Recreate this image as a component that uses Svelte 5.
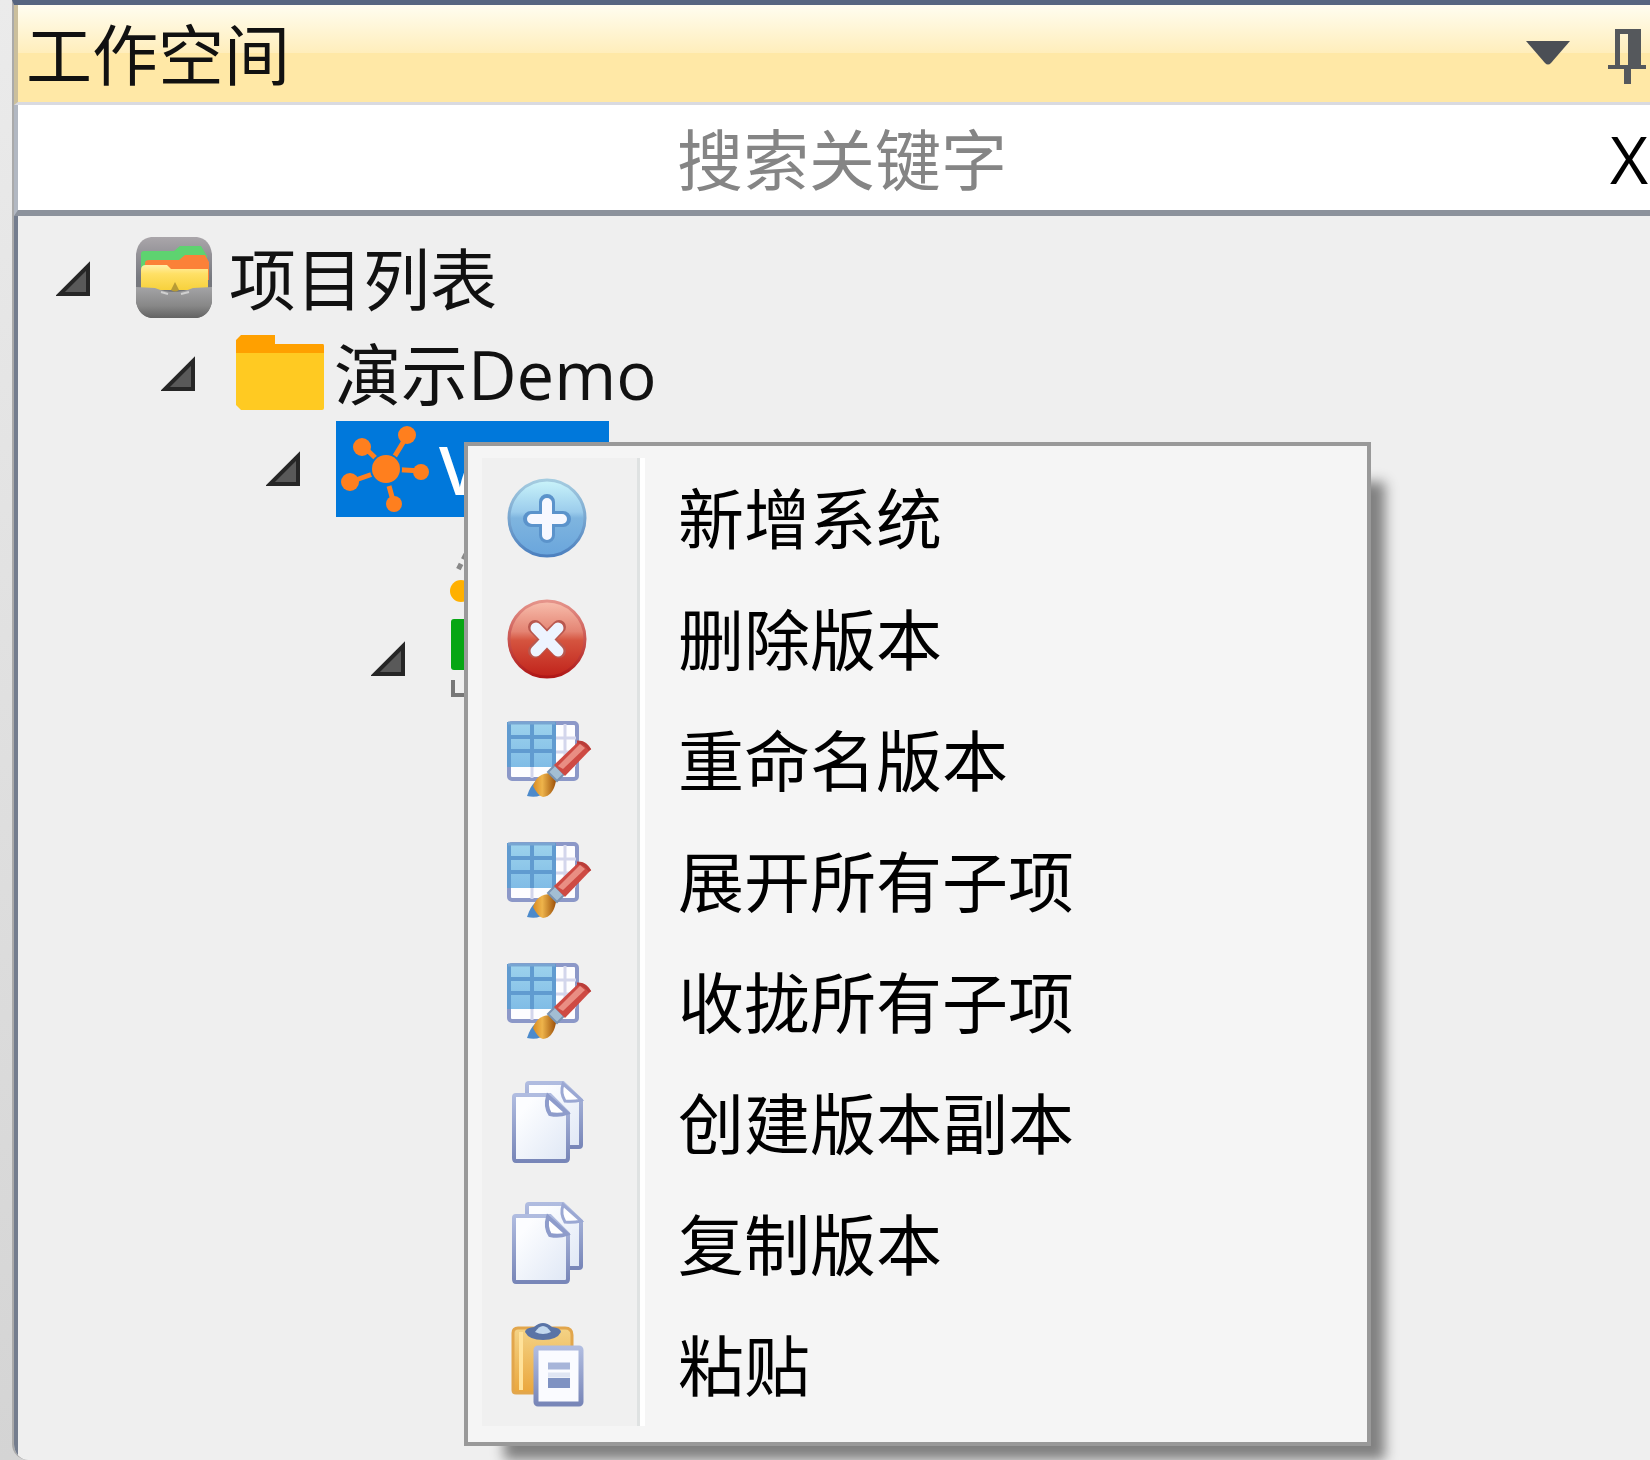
<script>
  let keyword = $state('');

  const menuItems = [
    { icon: 'add', label: '新增系统' },
    { icon: 'remove', label: '删除版本' },
    { icon: 'edit', label: '重命名版本' },
    { icon: 'edit', label: '展开所有子项' },
    { icon: 'edit', label: '收拢所有子项' },
    { icon: 'copy', label: '创建版本副本' },
    { icon: 'copy', label: '复制版本' },
    { icon: 'paste', label: '粘贴' }
  ];
</script>

{#snippet toggle(name)}
  <button class="toggle" aria-label={name} aria-expanded="true">
    <svg viewBox="0 0 36 36" width="36" height="36" aria-hidden="true">
      <path d="M32 5V33H4Z" fill="#595959" stroke="#262626" stroke-width="4" />
    </svg>
  </button>
{/snippet}

{#snippet menuIcon(kind)}
  <svg class="menu-icon" viewBox="0 0 90 90" aria-hidden="true">
    {#if kind === 'add'}
      <circle cx="42" cy="44" r="38" fill="url(#blueBall)" stroke="url(#blueRim)" stroke-width="3" />
      <path d="M42 28V61M26 45H58" stroke="#5b93cb" stroke-width="16" stroke-linecap="round" />
      <path d="M42 29V61M27 45H57" stroke="#f7f8ff" stroke-width="10" stroke-linecap="round" />
    {:else if kind === 'remove'}
      <circle cx="42" cy="44" r="38" fill="url(#redBall)" stroke="url(#redRim)" stroke-width="3" />
      <path d="M30 32L54 56M54 32L30 56" stroke="#b9584f" stroke-width="14" stroke-linecap="round" />
      <path d="M31 33L53 56M53 33L31 56" stroke="#edf4ff" stroke-width="11" stroke-linecap="round" />
    {:else if kind === 'edit'}
      <rect x="4" y="7" width="68" height="56" rx="3" fill="#fdfdff" stroke="#8c98c8" stroke-width="4" />
      <path d="M50 22H71M50 36H71M50 49H71M60 8V50M27 51V62M50 51V62" stroke="#d3d6ec" stroke-width="3" />
      <rect x="3" y="6" width="47" height="45" fill="url(#tableBlue)" />
      <path d="M3 21H50M3 35H50M27 6V51M49 6V51M4 6V51" stroke="#609bd0" stroke-width="4" />
      <path d="M3 7H50" stroke="#78a5d2" stroke-width="3" />
      <path d="M22 80Q25 70 31 65L42 75Q34 83 22 80Z" fill="#4c8acb" />
      <path d="M28 70Q32 57 46 57L51 65Q48 80 38 81Q33 80 28 70Z" fill="url(#bristle)" />
      <path d="M43 56L50 49L59 58L52 65Z" fill="#a3bed3" stroke="#7993b2" stroke-width="2" />
      <path d="M49 49L74 25Q81 24 86 33L60 60Z" fill="#ce4a43" />
      <path d="M53 50L75 28L80 32L58 53Z" fill="#e98e83" />
      <path d="M72 26Q79 25 85 34" fill="none" stroke="#b93d39" stroke-width="3" />
    {:else if kind === 'copy'}
      <path d="M24 4H58L76 21V66Q76 68 74 68H24Q22 68 22 66V6Q22 4 24 4Z" fill="url(#paper)" stroke="url(#pageRim)" stroke-width="4" />
      <path d="M58 5Q55 14 60 22Q68 23 76 21Z" fill="#fff" stroke="#9ba8d3" stroke-width="3" />
      <path d="M11 16H45L63 34V79Q63 82 60 82H11Q9 82 9 79V18Q9 16 11 16Z" fill="url(#paper)" stroke="url(#pageRim)" stroke-width="4" />
      <path d="M43 17Q40 27 45 35Q54 37 62 34Z" fill="#fff" stroke="#8e9ccb" stroke-width="4" />
    {:else}
      <path d="M13 7H60Q67 7 67 14V72H11Q8 72 8 69V12Q8 7 13 7Z" fill="url(#board)" stroke="#e2a64c" stroke-width="3" />
      <path d="M16 11V69" stroke="#ffe29a" stroke-width="4" />
      <path d="M20 11Q20 7 29 6Q38-2 47 6Q56 7 56 11Q52 19 38 19Q24 19 20 11Z" fill="#5a74a6" />
      <path d="M30 11Q38-1 46 11Q38 15 30 11Z" fill="#c2d8ee" />
      <rect x="31" y="27" width="45" height="56" rx="2" fill="#fafbff" stroke="url(#pageRim)" stroke-width="5" />
      <path d="M43 45H65" stroke="#a7b5d9" stroke-width="7" />
      <path d="M43 62H65" stroke="#7f92c2" stroke-width="10" />
      <path d="M43 54H65" stroke="#dfe5f3" stroke-width="5" />
    {/if}
  </svg>
{/snippet}

<svg class="defs" width="0" height="0" aria-hidden="true">
  <defs>
    <linearGradient id="blueBall" x2="0" y2="1"><stop stop-color="#caf4fa" /><stop offset=".42" stop-color="#9bccec" /><stop offset=".5" stop-color="#7fb5df" /><stop offset="1" stop-color="#69a5dc" /></linearGradient>
    <linearGradient id="blueRim" x2="0" y2="1"><stop stop-color="#a5cce0" /><stop offset="1" stop-color="#4c80bf" /></linearGradient>
    <linearGradient id="redBall" x2="0" y2="1"><stop stop-color="#f8bfae" /><stop offset=".4" stop-color="#e48473" /><stop offset=".52" stop-color="#d5543f" /><stop offset="1" stop-color="#c0221a" /></linearGradient>
    <linearGradient id="redRim" x2="0" y2="1"><stop stop-color="#e5948b" /><stop offset="1" stop-color="#af1716" /></linearGradient>
    <linearGradient id="tableBlue" x2="0" y2="1"><stop stop-color="#9dd3ed" /><stop offset="1" stop-color="#80bce6" /></linearGradient>
    <linearGradient id="bristle"><stop stop-color="#d88b23" /><stop offset=".4" stop-color="#eeb44b" /><stop offset="1" stop-color="#9c5009" /></linearGradient>
    <linearGradient id="paper" x2="1" y2="1"><stop offset=".2" stop-color="#fcfdff" /><stop offset="1" stop-color="#dfe7f5" /></linearGradient>
    <linearGradient id="pageRim" x2="0" y2="1"><stop stop-color="#b0bce0" /><stop offset="1" stop-color="#7886b8" /></linearGradient>
    <linearGradient id="board" x2="0" y2="1"><stop stop-color="#f4d386" /><stop offset="1" stop-color="#eaa63c" /></linearGradient>
    <linearGradient id="case" x2="0" y2="1"><stop stop-color="#aaa6aa" /><stop offset=".5" stop-color="#777980" /><stop offset="1" stop-color="#707070" /></linearGradient>
    <linearGradient id="pocket" x2="0" y2="1"><stop stop-color="#a4a4a6" /><stop offset=".6" stop-color="#888" /><stop offset="1" stop-color="#636363" /></linearGradient>
    <linearGradient id="yellowFile" x2="0" y2="1"><stop stop-color="#fff0a8" /><stop offset=".35" stop-color="#ffe066" /><stop offset="1" stop-color="#f7d13c" /></linearGradient>
  </defs>
</svg>

<div class="window">
  <section class="panel" aria-label="工作空间">
    <header class="title-bar">
      <h1>工作空间</h1>
      <button class="title-button" aria-label="窗口选项">
        <svg width="48" height="60" viewBox="0 0 48 60" aria-hidden="true"><path d="M2 17H46L27 39Q24 42 21 39Z" fill="#4b4f55" /></svg>
      </button>
      <button class="title-button" aria-label="固定">
        <svg width="40" height="60" viewBox="0 0 40 60" aria-hidden="true">
          <path d="M7 5H33V41H38V45H23V60H16V45H0V41H7ZM12 10V41H20V10Z" fill="#55585c" fill-rule="evenodd" />
        </svg>
      </button>
    </header>

    <div class="search">
      <input type="text" placeholder="搜索关键字" aria-label="搜索关键字" bind:value={keyword} />
      <button class="clear" onclick={() => (keyword = '')}>X</button>
    </div>

    <div class="content">
      <ul class="tree">
        <li>
          <div class="row">
            {@render toggle('收起项目列表')}
            <span class="node">
              <svg class="node-icon" viewBox="0 0 90 90" aria-hidden="true">
                <path d="M20 3H66Q79 5 81 20V68Q78 82 66 84H20Q8 82 5 68V20Q7 5 20 3Z" fill="url(#case)" />
                <path d="M10 20Q10 17 13 17H43L49 12H70L76 22V40H10Z" fill="#5ed370" />
                <path d="M14 29Q14 26 18 26H48L54 21H74L78 28V46H14Z" fill="#fb8138" />
                <path d="M10 36Q10 31 15 31H36L40 35H77V56H10Z" fill="url(#yellowFile)" />
                <path d="M5 53L24 54Q43 62 62 54L81 53V68Q78 82 66 84H20Q8 82 5 68Z" fill="url(#pocket)" />
                <path d="M40 56L44 48L48 56Q44 59 40 56Z" fill="#b79b35" />
                <path d="M30 58L37 60M50 60L58 58" stroke="#d0d0d0" stroke-width="2" />
              </svg>
              <span>项目列表</span>
            </span>
          </div>
          <ul>
            <li>
              <div class="row">
                {@render toggle('收起演示Demo')}
                <span class="node">
                  <svg class="node-icon" viewBox="0 0 90 90" aria-hidden="true">
                    <path d="M3 8L5 6H39V15H87Q88 15 88 17V29H0V11Z" fill="#ffa000" />
                    <path d="M0 24H88V79Q88 81 86 81H5L0 76Z" fill="#ffca22" />
                  </svg>
                  <span>演示Demo</span>
                </span>
              </div>
              <ul>
                <li>
                  <div class="row">
                    {@render toggle('收起版本')}
                    <span class="node selected">
                      <svg class="node-icon" viewBox="0 0 90 90" aria-hidden="true">
                        <path d="M46 45L66 12M46 45L22 22M46 45L9 58M46 45L81 47M48 62L53 80" stroke="#ff7f1e" stroke-width="5" />
                        <circle cx="45" cy="45" r="16" fill="#0078db" />
                        <g fill="#ff7f1e"><circle cx="45" cy="45" r="14" /><circle cx="66" cy="11" r="9" /><circle cx="21" cy="23" r="9" /><circle cx="9" cy="58" r="9" /><circle cx="80" cy="48" r="8" /><circle cx="53" cy="80" r="8" /></g>
                      </svg>
                      <span>V1.0</span>
                    </span>
                  </div>
                  <ul>
                    <li>
                      <div class="row">
                        <span class="toggle"></span>
                        <span class="node">
                          <svg class="node-icon" viewBox="0 0 90 90" aria-hidden="true">
                            <path d="M20 35L11 53" fill="none" stroke="#888" stroke-width="5" stroke-dasharray="6 5" />
                            <circle cx="15" cy="72" r="11" fill="#ffb000" />
                          </svg>
                        </span>
                      </div>
                    </li>
                    <li>
                      <div class="row">
                        {@render toggle('收起系统')}
                        <span class="node">
                          <svg class="node-icon" viewBox="0 0 90 90" aria-hidden="true">
                            <rect x="5" y="5" width="50" height="51" rx="3" fill="#06a613" />
                            <path d="M7 66V81H60" fill="none" stroke="#777" stroke-width="4" />
                          </svg>
                        </span>
                      </div>
                    </li>
                  </ul>
                </li>
              </ul>
            </li>
          </ul>
        </li>
      </ul>
    </div>
  </section>

  <div class="menu" role="menu">
    {#each menuItems as item}
      <button class="menu-item" role="menuitem">
        <span class="gutter">{@render menuIcon(item.icon)}</span>
        <span class="menu-label">{item.label}</span>
      </button>
    {/each}
  </div>
</div>

<style>
  :global(body) {
    margin: 0;
    background: #d8d8d8;
  }

  .defs {
    position: absolute;
  }

  .window,
  .window button,
  .window input {
    font-family: 'Open Sans', 'Noto Sans CJK SC', sans-serif;
    font-size: 66px;
    line-height: 90px;
    color: #111;
  }

  .window button {
    padding: 0;
    border: 0;
    background: none;
    text-align: left;
  }

  .window {
    position: relative;
    display: flex;
    box-sizing: border-box;
    min-height: 100vh;
    padding-left: 12px;
    overflow: hidden;
    background: linear-gradient(#ebebeb, #d4d4d4);
  }

  .panel {
    flex: 1;
    display: flex;
    flex-direction: column;
    min-width: 0;
    border-left: 2px solid #aaa;
    border-top: 5px solid #566580;
    border-bottom-left-radius: 16px;
    overflow: hidden;
    background: #efefef;
  }

  .title-bar {
    display: flex;
    align-items: center;
    gap: 36px;
    height: 97px;
    padding: 0 2px 0 8px;
    border-left: 4px solid #cbbf9c;
    border-bottom: 3px solid #d9dae0;
    background: linear-gradient(#fffdf0, #ffeebc 49%, #ffe8a6 49%, #ffe8a6);
  }

  h1 {
    flex: 1;
    margin: 0;
    font-size: 66px;
    font-weight: 400;
    line-height: 90px;
  }

  .title-button,
  .title-button svg {
    display: block;
  }

  .search {
    display: flex;
    align-items: center;
    height: 105px;
    border-left: 4px solid #b2b8c2;
    border-bottom: 6px solid #8c929c;
    background: #fff;
  }

  .search input {
    flex: 1;
    min-width: 0;
    height: 100px;
    padding: 2px 0 0 56px;
    border: 0;
    outline: 0;
    background: none;
    text-align: center;
  }

  .search input::placeholder {
    color: #858585;
    opacity: 1;
  }

  .search .clear {
    width: 40px;
    color: #000;
  }

  .content {
    flex: 1;
    padding: 15px 0 0 38px;
    border-left: 4px solid #747d8e;
  }

  ul {
    margin: 0;
    padding: 0;
    list-style: none;
  }

  ul ul {
    padding-left: 105px;
  }

  .row {
    display: flex;
    align-items: center;
    gap: 34px;
    height: 95px;
  }

  .toggle {
    flex: none;
    width: 36px;
    height: 36px;
  }

  .toggle svg {
    display: block;
  }

  .node {
    display: flex;
    flex: none;
    align-items: center;
    gap: 8px;
    height: 96px;
    padding: 0 5px;
    font-size: 67px;
    white-space: nowrap;
  }

  .node.selected {
    width: 263px;
    background: #0078db;
    color: #fff;
    font-weight: 600;
  }

  .node-icon {
    flex: none;
    width: 90px;
    height: 90px;
  }

  .menu {
    position: absolute;
    left: 464px;
    top: 442px;
    box-sizing: border-box;
    width: 907px;
    padding: 12px 14px 16px;
    border: 4px solid #999;
    background: #f5f5f5;
    box-shadow: 27px 27px 12px -13px #808080;
  }

  .window .menu-item {
    display: flex;
    align-items: center;
    width: 100%;
    height: 121px;
    color: #000;
  }

  .gutter {
    display: flex;
    align-items: center;
    box-sizing: border-box;
    width: 163px;
    height: 121px;
    padding-left: 23px;
    border-right: 5px solid #fff;
    background: #f0f0f0;
    box-shadow: inset -3px 0 #dfe2e2;
  }

  .menu-icon {
    width: 90px;
    height: 90px;
  }

  .menu-label {
    padding: 0 0 2px 33px;
  }
</style>
